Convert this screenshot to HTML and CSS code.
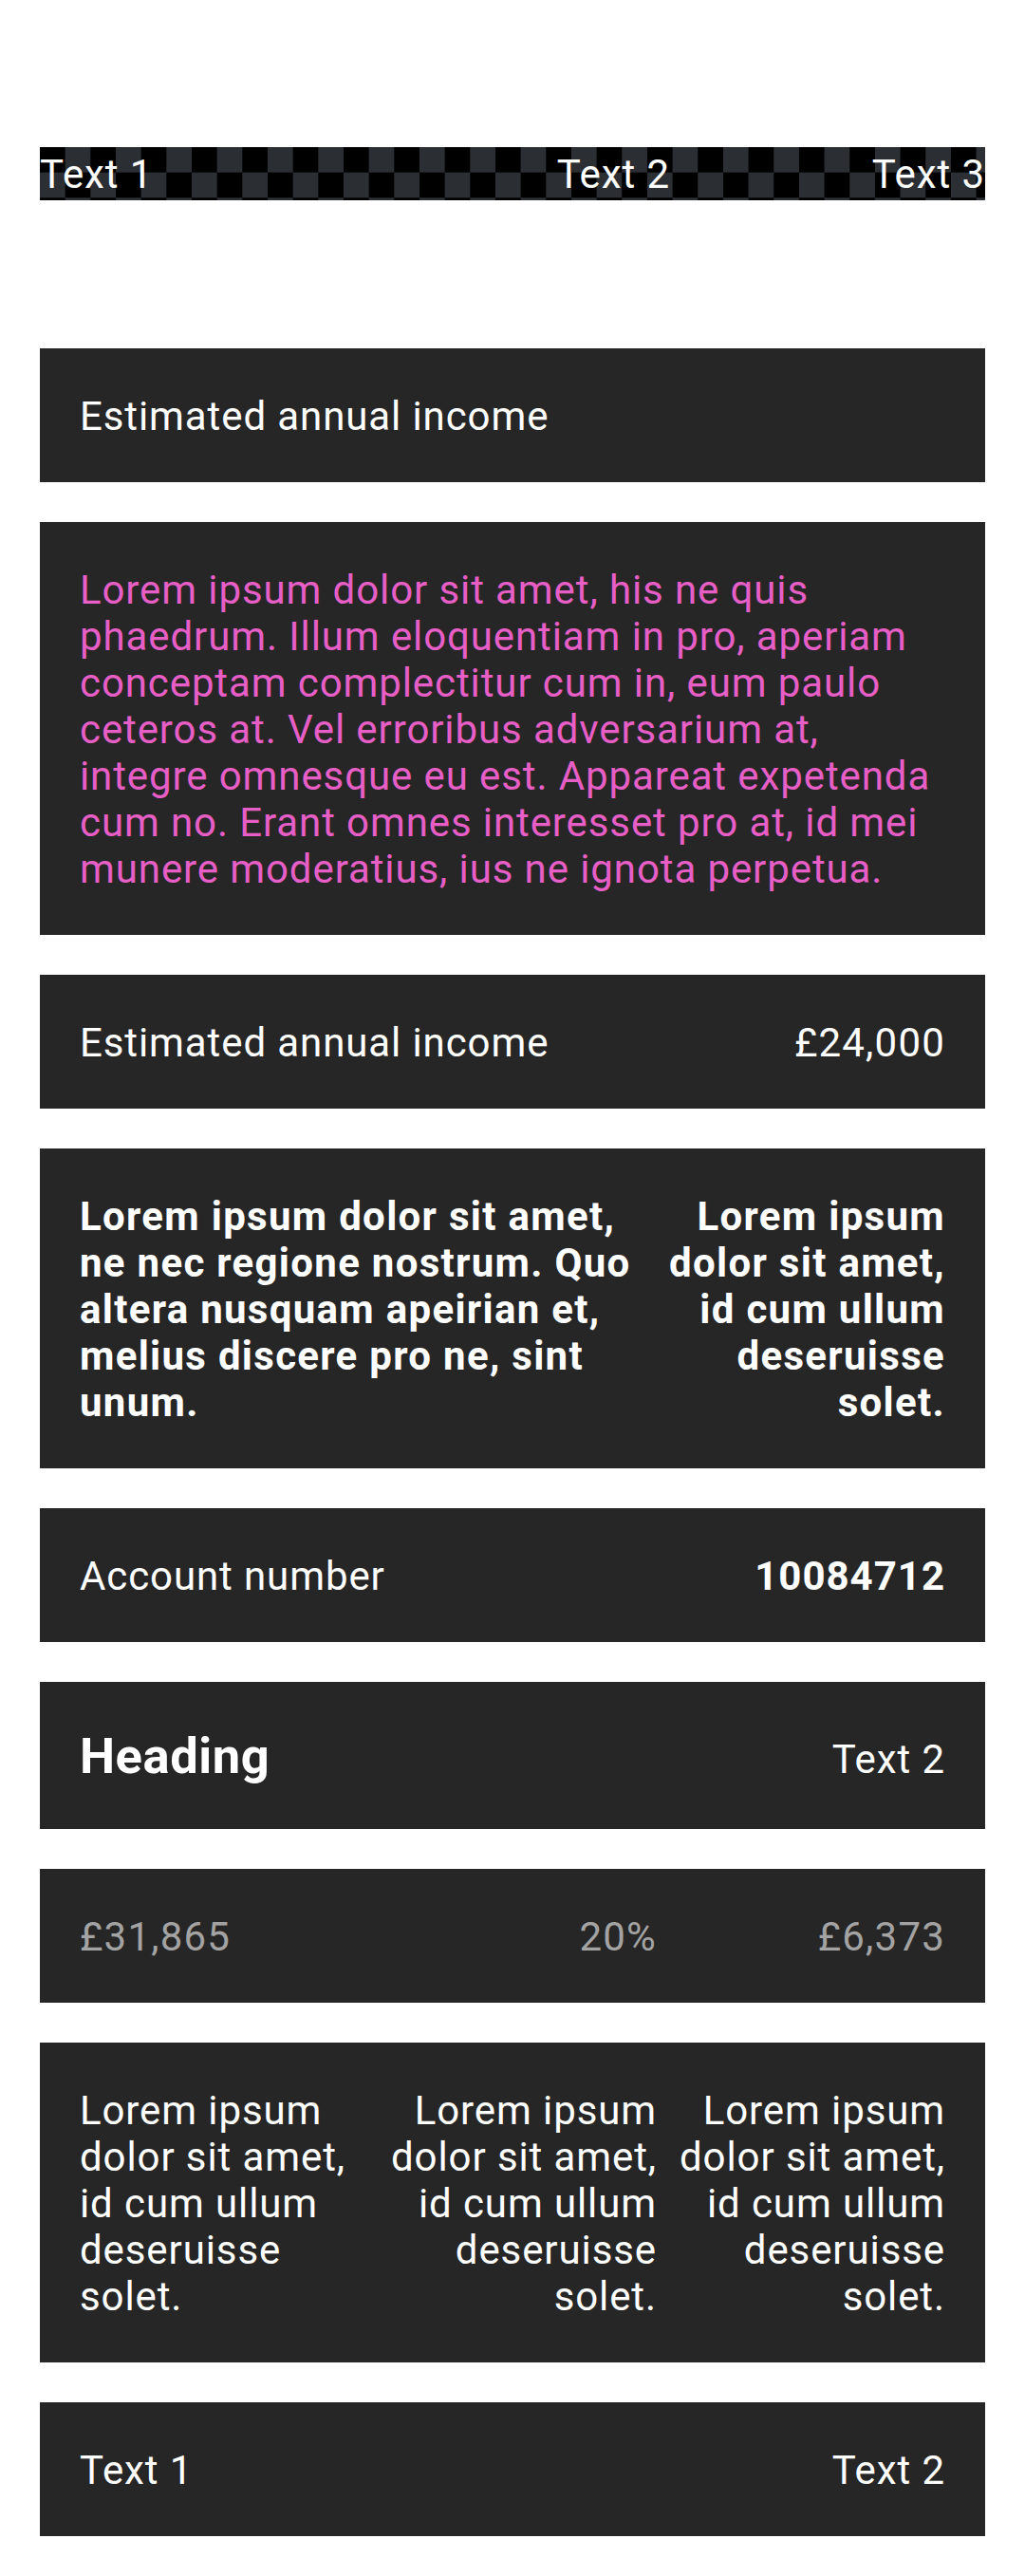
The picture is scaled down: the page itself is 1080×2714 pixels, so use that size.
FILE: index.html
```html
<!DOCTYPE html>
<html lang="en">
<head>
<meta charset="utf-8">
<title>Rows</title>
<link rel="stylesheet" href="styles.css">
</head>
<body>
<div class="page">
  <div class="strip">
    <span>Text 1</span>
    <span class="end">Text 2</span>
    <span class="end">Text 3</span>
  </div>

  <div class="cards">
    <div class="card">
      <span>Estimated annual income</span>
    </div>

    <div class="card">
      <p class="pink">Lorem ipsum dolor sit amet, his ne quis phaedrum. Illum eloquentiam in pro, aperiam conceptam complectitur cum in, eum paulo ceteros at. Vel erroribus adversarium at, integre omnesque eu est. Appareat expetenda cum no. Erant omnes interesset pro at, id mei munere moderatius, ius ne ignota perpetua.</p>
    </div>

    <div class="card row">
      <span>Estimated annual income</span>
      <span class="num">£24,000</span>
    </div>

    <div class="card split bold">
      <p>Lorem ipsum dolor sit amet, ne nec regione nostrum. Quo altera nusquam apeirian et, melius discere pro ne, sint unum.</p>
      <p class="end">Lorem ipsum dolor sit amet, id cum ullum deseruisse solet.</p>
    </div>

    <div class="card row">
      <span>Account number</span>
      <span class="strong num-bold">10084712</span>
    </div>

    <div class="card row heading-row">
      <h2 class="heading">Heading</h2>
      <span>Text 2</span>
    </div>

    <div class="card cols3 muted">
      <span class="num">£31,865</span>
      <span class="end num">20%</span>
      <span class="end num">£6,373</span>
    </div>

    <div class="card cols3">
      <p>Lorem ipsum dolor sit amet, id cum ullum deseruisse solet.</p>
      <p class="end">Lorem ipsum dolor sit amet, id cum ullum deseruisse solet.</p>
      <p class="end">Lorem ipsum dolor sit amet, id cum ullum deseruisse solet.</p>
    </div>

    <div class="card row">
      <span>Text 1</span>
      <span>Text 2</span>
    </div>
  </div>
</div>
</body>
</html>
```

FILE: styles.css
```css
* {
  box-sizing: border-box;
}

html, body {
  margin: 0;
  padding: 0;
  background: #ffffff;
}

body {
  font-family: Roboto, "Noto Sans", "Liberation Sans", sans-serif;
  color: #ffffff;
  letter-spacing: 0.9px;
}

p, h2 {
  margin: 0;
}

.page {
  padding: 155px 42px 0;
}

.strip {
  display: grid;
  grid-template-columns: repeat(3, 1fr);
  height: 55.7px;
  padding-top: 3px;
  font-size: 42px;
  line-height: 52.7px;
  color: #ffffff;
  background-color: #000000;
  background-image: repeating-conic-gradient(#2b2e32 0 25%, #000000 0 50%);
  background-size: 53.34px 53.34px;
  background-position: 0 0;
  white-space: nowrap;
}

.end {
  text-align: right;
}

.cards {
  margin-top: 156.3px;
  display: flex;
  flex-direction: column;
  gap: 42px;
}

.card {
  background: #262626;
  color: #ffffff;
  padding: 47px 42px 45px;
  font-size: 42px;
  line-height: 49px;
}

.pink {
  color: #e65ec6;
}

.row {
  display: flex;
  justify-content: space-between;
  align-items: center;
}

.heading-row {
  align-items: baseline;
}

.bold {
  font-weight: 700;
  letter-spacing: 1.3px;
}

.strong {
  font-weight: 700;
}

.num {
  letter-spacing: 1.2px;
}

.num-bold {
  letter-spacing: 1px;
}

.split {
  display: grid;
  grid-template-columns: 2fr 1fr;
}

.cols3 {
  display: grid;
  grid-template-columns: repeat(3, 1fr);
}

.muted {
  color: #a3a3a3;
}

.heading {
  font-size: 52.5px;
  line-height: 63px;
  font-weight: 700;
  letter-spacing: 0.55px;
}
```
